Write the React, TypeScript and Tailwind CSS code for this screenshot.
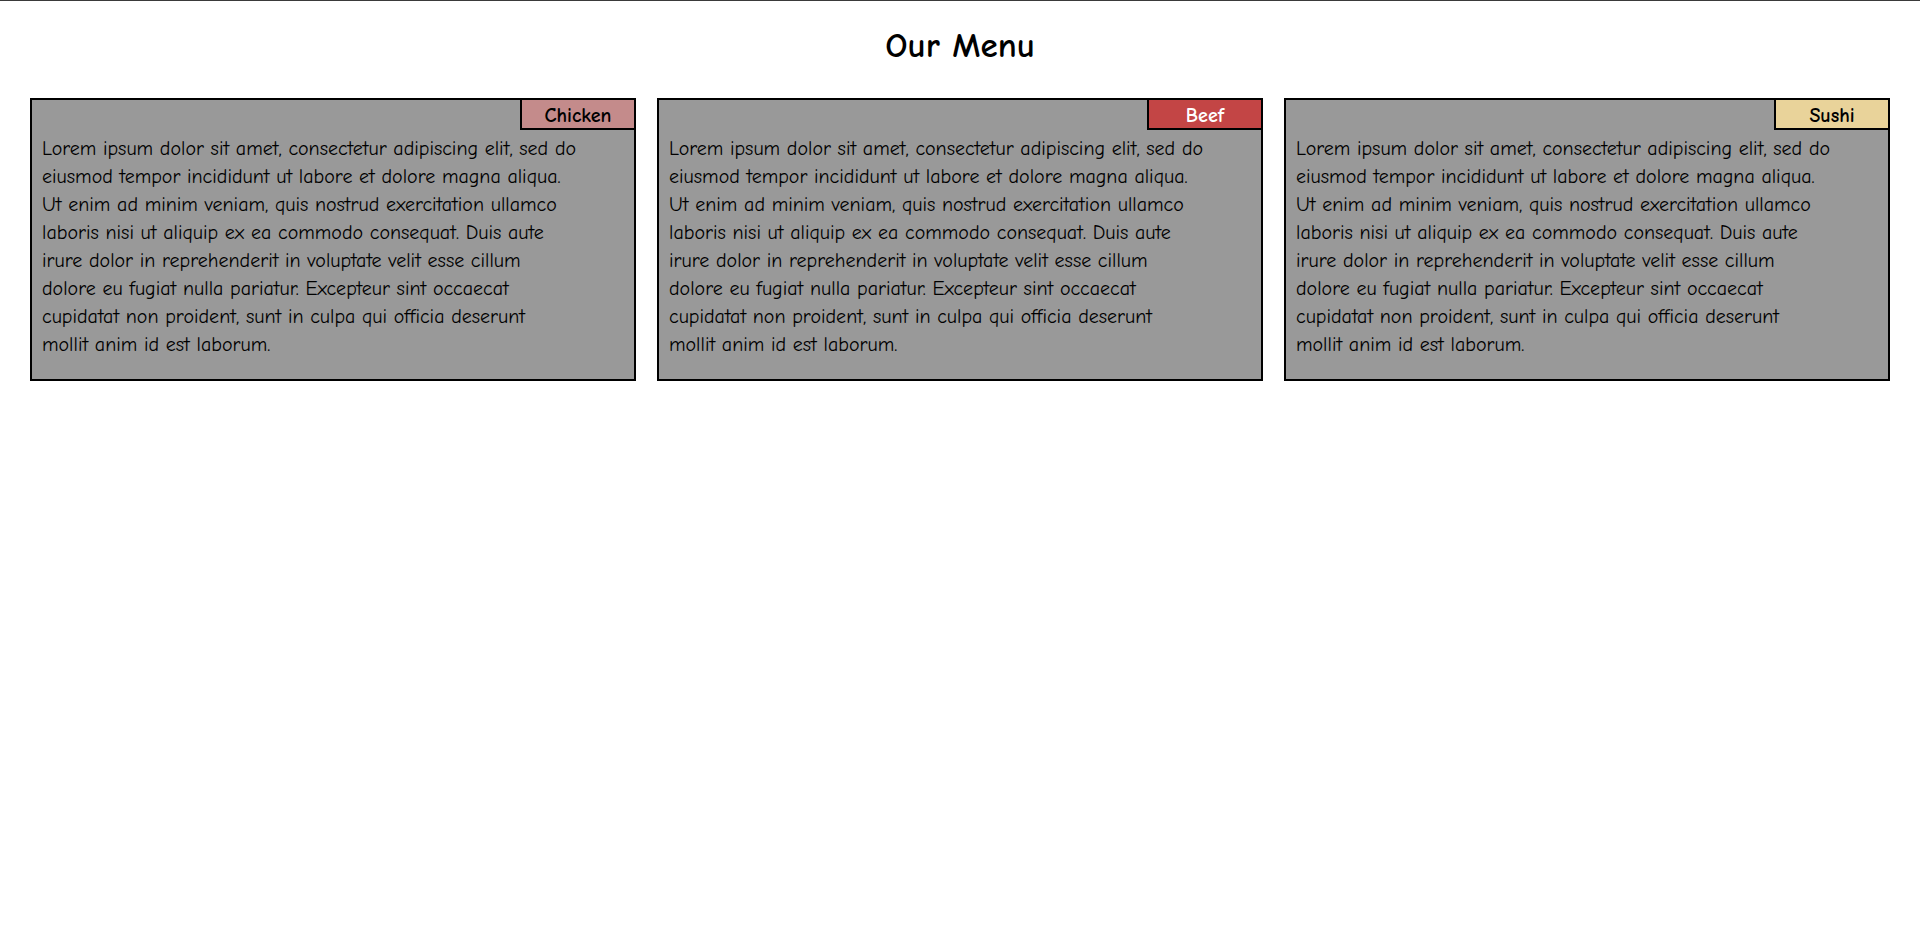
const menu = [
  { name: 'Chicken', tag: 'bg-[#c48b8b] text-black' },
  { name: 'Beef', tag: 'bg-[#c34545] text-white' },
  { name: 'Sushi', tag: 'bg-[#e9d39a] text-black' },
];

// line breaks kept as in the original layout
const loremLines = [
  'Lorem ipsum dolor sit amet, consectetur adipiscing elit, sed do',
  'eiusmod tempor incididunt ut labore et dolore magna aliqua.',
  'Ut enim ad minim veniam, quis nostrud exercitation ullamco',
  'laboris nisi ut aliquip ex ea commodo consequat. Duis aute',
  'irure dolor in reprehenderit in voluptate velit esse cillum',
  'dolore eu fugiat nulla pariatur. Excepteur sint occaecat',
  'cupidatat non proident, sunt in culpa qui officia deserunt',
  'mollit anim id est laborum.',
];

export default function App() {
  return (
    <div
      className="min-h-screen bg-white border-t border-[#3a3a3a] text-black"
      style={{ fontFamily: '"Comic Sans MS", "Comic Neue", "Open Sans", sans-serif' }}
    >
      <h1 className="mt-[23px] text-center text-[35px] font-bold leading-[44px]">Our Menu</h1>

      <div className="mt-[30px] grid grid-cols-3 gap-[21px] px-[30px]">
        {menu.map((item) => (
          <div key={item.name} className="flex flex-col border-2 border-black bg-[#999999]">
            <div className="flex justify-end">
              <div
                className={`w-[114px] h-[30px] border-l-2 border-b-2 border-black text-center text-[20px] font-bold leading-[31px] ${item.tag}`}
              >
                {item.name}
              </div>
            </div>
            <p className="px-[10px] pt-[5px] pb-[20px] text-[20px] leading-[28px]">
              {loremLines.map((line) => (
                <span key={line} className="block whitespace-nowrap">
                  {line}
                </span>
              ))}
            </p>
          </div>
        ))}
      </div>
    </div>
  );
}
